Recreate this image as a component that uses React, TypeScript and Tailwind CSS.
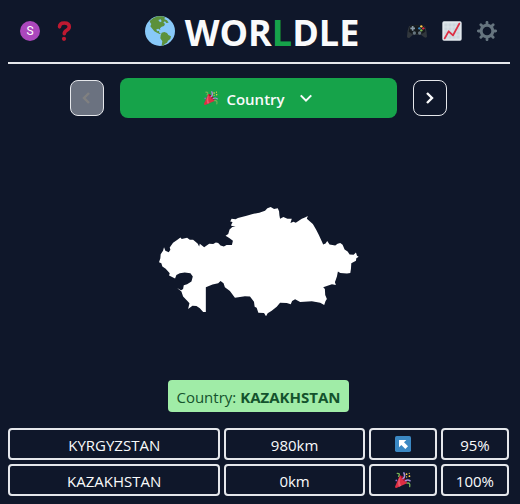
import React from "react";

function Globe() {
  return (
    <svg viewBox="0 0 90 90" className="size-[30px] shrink-0" aria-hidden="true">
      <circle cx="45" cy="45" r="45" fill="#88C9F9" />
      <path
        fill="#5C913B"
        d="M14 15Q24 5 38 1L52 1L62 5L57 9L66 13L71 20L64 21L60 16L55 19L60 24L57 30L50 32L45 37L46 42L40 38L34 40L36 46L42 45L43 50L48 53L44 54L36 50L28 46L22 38L16 31L19 24L16 20Z M50 50L58 48L66 51L70 57L78 61L76 69L69 74L66 80L59 84L56 89L50 88L52 76L46 67L47 58Z"
      />
      <path fill="#88C9F9" d="M40 12L47 10L50 16L45 19Z" />
    </svg>
  );
}

function QuestionMark() {
  return (
    <svg viewBox="0 0 36 36" className="size-5" aria-hidden="true">
      <path
        d="M10 10.500C10 6 13.500 3.500 18.500 3.500C24 3.500 27.500 6 27.500 10.500C27.500 17.500 18.500 16 18.500 23"
        fill="none"
        stroke="#BE1931"
        strokeWidth="6.500"
        strokeLinecap="round"
      />
      <circle cx="18" cy="32" r="3.800" fill="#BE1931" />
    </svg>
  );
}

function Gamepad() {
  return (
    <svg viewBox="0 0 60 60" className="size-5" aria-hidden="true">
      <path fill="#31373D" d="M6 16L14 13L46 13L54 16Q60 30 60 47Q57 52 52 49L42 41L18 41L8 50Q2 53 0 47Q0 30 6 16Z" />
      <path fill="#151A1E" d="M8 18Q12 10 19 13L41 13Q48 10 53 18L55 32L43 40L17 40L5 32Z" />
      <path d="M17 15V29M10 22H24" stroke="#8899A6" strokeWidth="5" />
      <circle cx="22" cy="36" r="5" fill="#66757F" />
      <circle cx="38" cy="36" r="5" fill="#66757F" />
      <circle cx="43" cy="16" r="3.500" fill="#FFCC4D" />
      <circle cx="49" cy="22" r="3.500" fill="#DD2E44" />
      <circle cx="37" cy="22" r="3.500" fill="#3B88C3" />
      <circle cx="43" cy="28" r="3.500" fill="#77B255" />
    </svg>
  );
}

function Chart() {
  return (
    <svg viewBox="0 0 60 60" className="size-5" aria-hidden="true">
      <rect x="1" y="1" width="58" height="58" rx="5" fill="#E1E8ED" />
      <path d="M7 7H53V53H7Z" fill="#CCD6DD" />
      <path d="M18 4V56M30 4V56M42 4V56M4 18H56M4 30H56M4 42H56" stroke="#E1E8ED" strokeWidth="2" />
      <path d="M8 52L20 31L33 43L52 8" fill="none" stroke="#DD2E44" strokeWidth="5.500" strokeLinecap="round" strokeLinejoin="round" />
    </svg>
  );
}

function Gear() {
  return (
    <svg viewBox="0 0 60 60" className="size-5" aria-hidden="true">
      <circle cx="30" cy="30" r="17.500" fill="none" stroke="#66757F" strokeWidth="9" />
      <path
        d="M30 4V10M30 50V56M4 30H10M50 30H56M11.600 11.600L16 16M44 44L48.400 48.400M48.400 11.600L44 16M16 44L11.600 48.400"
        stroke="#66757F"
        strokeWidth="8.500"
        strokeLinecap="round"
      />
    </svg>
  );
}

function Popper({ className }: { className: string }) {
  return (
    <svg viewBox="0 0 36 36" className={className} aria-hidden="true">
      <path fill="#DD2E44" d="M11 8Q10.500 8.500 9 12L0 33Q0 36 3 36L27 25.500Q29 24 24 18Q15 7 11 8Z" />
      <path fill="#EA596E" d="M12 12Q9 24 14 31L9 33Q5 26 9 14Z" />
      <path fill="#A0041E" d="M12 8Q22 12 27 24Q17 21 12 8Z" />
      <path d="M18 15Q24 11 20 2" fill="none" stroke="#AA8DD8" strokeWidth="3.500" strokeLinecap="round" />
      <path d="M23 20Q29 16 34 20" fill="none" stroke="#AA8DD8" strokeWidth="3" strokeLinecap="round" />
      <path d="M5 3Q13 3 8 10" fill="none" stroke="#77B255" strokeWidth="3" strokeLinecap="round" />
      <path d="M27 25Q35 23 33 33" fill="none" stroke="#77B255" strokeWidth="3" strokeLinecap="round" />
      <circle cx="26" cy="5" r="2" fill="#FFCC4D" />
      <circle cx="32.500" cy="9.500" r="2" fill="#FFCC4D" />
      <circle cx="32" cy="3" r="1.500" fill="#FFCC4D" />
      <circle cx="26" cy="11" r="1.500" fill="#FFCC4D" />
      <circle cx="3" cy="19" r="2" fill="#9266CC" />
    </svg>
  );
}

function UpLeft() {
  return (
    <svg viewBox="0 0 48 48" className="size-4" aria-hidden="true">
      <rect width="48" height="48" rx="5" fill="#3B88C3" />
      <path fill="#FFF" d="M12 12H34L27 19L39 31L31 39L19 27L12 34Z" />
    </svg>
  );
}

function Chevron({ d, className }: { d: string; className: string }) {
  return (
    <svg viewBox="0 0 16 16" className={className} aria-hidden="true">
      <path d={d} fill="none" stroke="currentColor" strokeWidth="2.400" />
    </svg>
  );
}

function CountryShape() {
  return (
    <svg viewBox="28 37 598 328" className="w-[200px]" role="img" aria-label="Country outline">
      <path
        fill="#FFF"
        d="M28 202L32 190L33 178L40 168L43 157L47 168L57 172L62 165L60 158L70 144L82 136L92 128L96 133L112 129L120 135L130 135L138 142L144 147L148 155L150 147L163 157L178 147L190 148L198 143L205 145L212 152L222 155L230 151L246 151L249 138L238 130L227 123L235 118L239 104L247 97L257 97L243 92L248 82L241 80L245 72L257 74L264 70L290 63L308 58L328 54L345 48L352 41L362 37L372 43L383 41L387 50L388 62L390 72L400 67L412 72L425 72L421 85L430 81L437 84L455 72L466 68L473 64L470 72L488 88L498 105L506 121L519 149L526 146L531 139L538 149L555 152L562 147L570 145L577 150L583 164L592 170L598 179L610 180L617 173L620 183L625 186L618 190L617 198L603 205L602 222L600 234L590 236L570 234L563 230L560 245L554 262L557 270L545 268L519 277L524 282L525 300L530 312L526 318L522 330L510 323L485 319L450 321L435 313L426 318L422 328L410 324L390 323L380 335L365 347L353 355L348 364L342 354L325 353L320 338L314 335L312 320L300 305L285 304L255 308L240 288L225 277L221 265L212 258L205 265L188 269L168 277L168 351L160 351L150 340L140 333L128 332L115 342L119 325L113 318L100 305L95 290L82 279L94 286L100 282L102 271L112 268L125 260L129 245L122 235L105 233L90 235L80 240L76 251L58 242L60 235L48 222L38 215L35 205Z"
      />
    </svg>
  );
}

const guesses = [
  { name: "KYRGYZSTAN", distance: "980km", icon: <UpLeft />, score: "95%" },
  { name: "KAZAKHSTAN", distance: "0km", icon: <Popper className="size-4" />, score: "100%" },
];

const cell = "flex h-8 items-center justify-center rounded border-2 border-gray-200";

export default function App() {
  return (
    <div className="min-h-screen bg-[#0f172a] pr-[10px] pl-2 font-['Open_Sans',sans-serif] text-[15px] text-gray-50">
      <header className="flex h-16 items-center border-b-2 border-gray-200 pr-[13px] pl-3">
        <div className="flex w-[77px] items-center gap-[14px]">
          <button aria-label="Profile" className="flex size-5 items-center justify-center rounded-full bg-[#ab47bc] font-['Roboto',sans-serif] text-xs text-white">
            S
          </button>
          <button aria-label="How to play">
            <QuestionMark />
          </button>
        </div>
        <h1 className="flex flex-1 items-center justify-center gap-[10px] text-4xl font-bold">
          <Globe />
          <span className="pt-1">
            WOR<span className="text-[#16a34a]">L</span>DLE
          </span>
        </h1>
        <div className="flex items-center gap-[15px]">
          <button aria-label="Games"><Gamepad /></button>
          <button aria-label="Statistics"><Chart /></button>
          <button aria-label="Settings"><Gear /></button>
        </div>
      </header>
      <main className="pt-[14px] pr-px">
        <nav className="flex items-center gap-4 px-[62px]">
          <button disabled aria-label="Previous round" className="flex h-9 w-[34px] items-center justify-center rounded-lg border border-gray-200 bg-[#6b7280] text-[#808080]">
            <Chevron d="M10 3L5 8L10 13" className="size-4" />
          </button>
          <button className="flex h-10 flex-1 items-center justify-center rounded-lg bg-[#16a34a] font-semibold">
            <Popper className="mr-2 size-[14px]" />
            <span className="pt-0.5">Country</span>
            <Chevron d="M2 5L8 11L14 5" className="ml-[14px] size-[14px]" />
          </button>
          <button aria-label="Next round" className="flex h-9 w-[34px] items-center justify-center rounded-lg border border-gray-200">
            <Chevron d="M5 3L10 8L5 13" className="size-4" />
          </button>
        </nav>
        <div className="flex h-[262px] items-center justify-center pt-[26px]">
          <CountryShape />
        </div>
        <p className="mx-auto flex h-8 w-fit items-center gap-1 rounded bg-[#a0eca7] px-2 pt-0.5 text-[#14532d]">
          Country: <strong className="font-bold">KAZAKHSTAN</strong>
        </p>
        <ul className="flex flex-col gap-1 py-4">
          {guesses.map((g) => (
            <li key={g.name} className="grid grid-cols-7 gap-1">
              <span className={`${cell} col-span-3 pt-0.5`}>{g.name}</span>
              <span className={`${cell} col-span-2 pt-0.5`}>{g.distance}</span>
              <span className={cell}>{g.icon}</span>
              <span className={`${cell} pt-0.5`}>{g.score}</span>
            </li>
          ))}
        </ul>
      </main>
    </div>
  );
}
